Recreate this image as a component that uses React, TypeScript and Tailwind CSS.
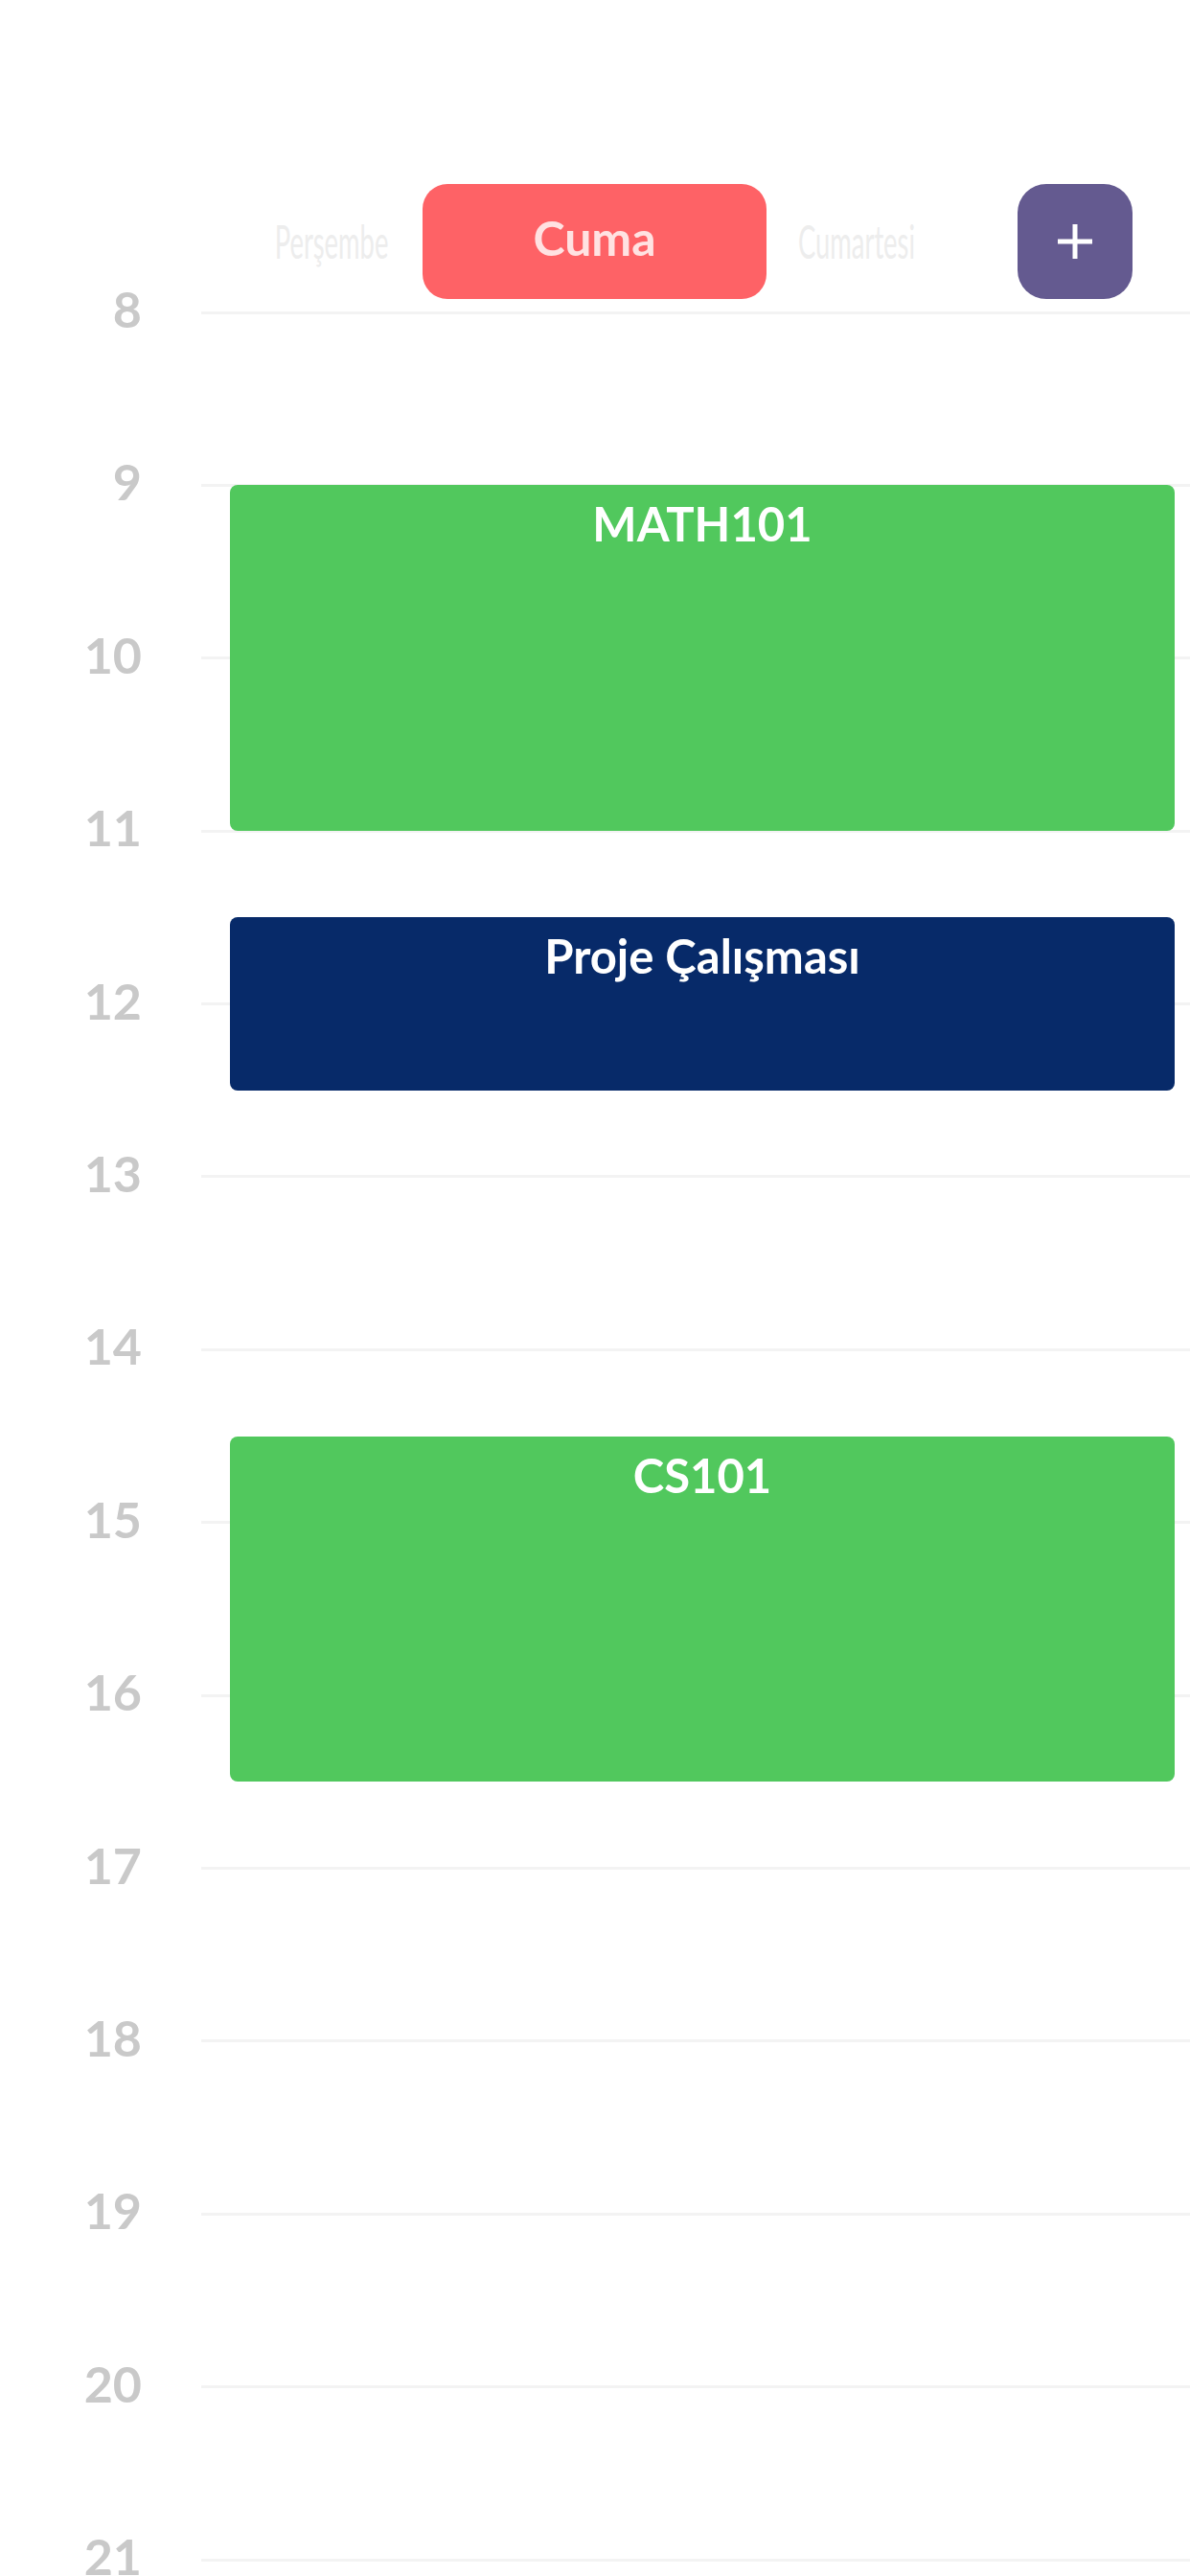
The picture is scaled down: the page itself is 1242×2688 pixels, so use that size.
import React from "react";

const HOURS = [8, 9, 10, 11, 12, 13, 14, 15, 16, 17, 18, 19, 20, 21];
const ROW = 180.4;

type Ev = { title: string; start: number; end: number; color: string };
const EVENTS: Ev[] = [
  { title: "MATH101", start: 9, end: 11, color: "green" },
  { title: "Proje Çalışması", start: 11.5, end: 12.5, color: "navy" },
  { title: "CS101", start: 14.5, end: 16.5, color: "green" },
];

export default function App() {
  return (
    <div
      className="w-[1242px] h-[2688px] bg-white overflow-hidden"
      style={{ fontFamily: "Lato, 'Noto Sans', 'Liberation Sans', sans-serif" }}
    >
      <div className="pt-[192px]">
        <div className="flex items-center h-[120px]">
          <div className="ml-[252px] w-[189px] flex justify-center">
            <span className="inline-block scale-x-[0.57] text-[48px] leading-none text-[#ededed] whitespace-nowrap">
              Perşembe
            </span>
          </div>
          <div className="w-[359px] h-[120px] rounded-[26px] bg-[#fe6266] flex items-center justify-center">
            <span className="text-[50px] font-bold text-[#ffe2e2] leading-none -mt-[8px]">Cuma</span>
          </div>
          <div className="w-[188px] flex justify-center">
            <span className="inline-block scale-x-[0.57] text-[48px] leading-none text-[#ededed] whitespace-nowrap">
              Cumartesi
            </span>
          </div>
          <div className="ml-[74px] w-[120px] h-[120px] rounded-[30px] bg-[#645a90] flex items-center justify-center">
            <svg width="36" height="36" viewBox="0 0 36 36">
              <rect x="15.5" y="0" width="5" height="36" fill="#ffffff" />
              <rect x="0" y="15.5" width="36" height="5" fill="#ffffff" />
            </svg>
          </div>
        </div>
      </div>

      <div className="relative -mt-[6px]">
        {HOURS.map((h) => (
          <div key={h} className="flex items-start h-[180.4px]">
            <div className="w-[148px] h-[40px] -mt-[4px] flex items-center justify-end text-[52px] font-bold text-[#c9c9c9] leading-none">
              {h}
            </div>
            <div className="ml-[62px] flex-1 mt-[18.5px] h-[3px] bg-[#f3f3f3]" />
          </div>
        ))}

        {EVENTS.map((e) => (
          <div
            key={e.title}
            className={
              "absolute left-[240px] right-[16px] rounded-[8px] flex justify-center pt-[11px] " +
              (e.color === "green" ? "bg-[#51c85d]" : "bg-[#072a69]")
            }
            style={{ top: 20 + (e.start - 8) * ROW, height: (e.end - e.start) * ROW }}
          >
            <span className="text-[49px] font-bold text-white leading-[1.2]">{e.title}</span>
          </div>
        ))}
      </div>
    </div>
  );
}
